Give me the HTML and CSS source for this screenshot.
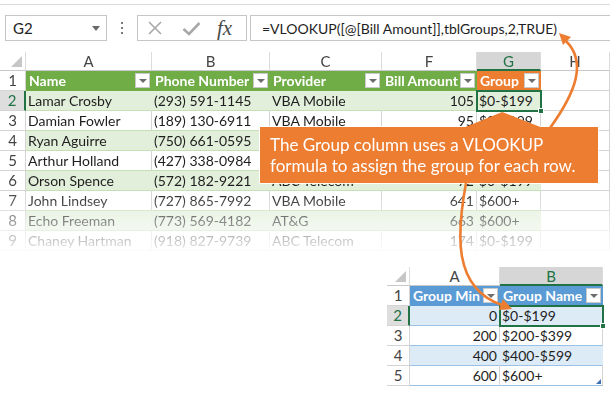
FILE: index.html
```html
<!DOCTYPE html>
<html>
<head>
<meta charset="utf-8">
<link rel="stylesheet" href="styles.css">
</head>
<body>
<div class="topline"></div>
<div class="fbar">
  <div class="namebox"><span>G2</span><span class="caret"></span></div>
  <div class="dots"><i></i><i></i><i></i></div>
  <div class="fxbox">
    <svg class="ico-x" width="16" height="16" viewBox="0 0 16 16"><path d="M2 2L14 14M14 2L2 14" stroke="#a8a8a8" stroke-width="1.6" fill="none"/></svg>
    <svg class="ico-ok" width="19" height="15" viewBox="0 0 19 15"><path d="M1.5 8L7 13L17.5 2" stroke="#a8a8a8" stroke-width="2.6" fill="none"/></svg>
    <span class="fx">fx</span>
  </div>
  <div class="formula">=VLOOKUP([@[Bill Amount]],tblGroups,2,TRUE)</div>
</div>

<div class="sheet s1">
  <div class="r ch">
    <div class="c corner"><span class="tri"></span></div>
    <div class="c">A</div><div class="c">B</div><div class="c">C</div><div class="c">F</div><div class="c selc">G</div><div class="c">H</div>
  </div>
  <div class="r hdr">
    <div class="c rh">1</div>
    <div class="c th g"><span>Name</span><i class="fb"></i></div>
    <div class="c th g"><span>Phone Number</span><i class="fb"></i></div>
    <div class="c th g"><span>Provider</span><i class="fb"></i></div>
    <div class="c th g"><span>Bill Amount</span><i class="fb"></i></div>
    <div class="c th o"><span>Group</span><i class="fb"></i></div>
    <div class="c"></div>
  </div>
  <div class="r band">
    <div class="c rh selr">2</div>
    <div class="c tc">Lamar Crosby</div><div class="c tc">(293) 591-1145</div><div class="c tc">VBA Mobile</div><div class="c tc num">105</div><div class="c tc active">$0-$199<i class="handle"></i></div><div class="c"></div>
  </div>
  <div class="r">
    <div class="c rh">3</div>
    <div class="c tc">Damian Fowler</div><div class="c tc">(189) 130-6911</div><div class="c tc">VBA Mobile</div><div class="c tc num">95</div><div class="c tc">$0-$199</div><div class="c"></div>
  </div>
  <div class="r band">
    <div class="c rh">4</div>
    <div class="c tc">Ryan Aguirre</div><div class="c tc">(750) 661-0595</div><div class="c tc">AT&amp;G</div><div class="c tc num">312</div><div class="c tc">$200-$399</div><div class="c"></div>
  </div>
  <div class="r">
    <div class="c rh">5</div>
    <div class="c tc">Arthur Holland</div><div class="c tc">(427) 338-0984</div><div class="c tc">ABC Telecom</div><div class="c tc num">226</div><div class="c tc">$200-$399</div><div class="c"></div>
  </div>
  <div class="r band">
    <div class="c rh">6</div>
    <div class="c tc">Orson Spence</div><div class="c tc">(572) 182-9221</div><div class="c tc">ABC Telecom</div><div class="c tc num">72</div><div class="c tc">$0-$199</div><div class="c"></div>
  </div>
  <div class="r">
    <div class="c rh">7</div>
    <div class="c tc">John Lindsey</div><div class="c tc">(727) 865-7992</div><div class="c tc">VBA Mobile</div><div class="c tc num">641</div><div class="c tc">$600+</div><div class="c"></div>
  </div>
  <div class="r band">
    <div class="c rh">8</div>
    <div class="c tc">Echo Freeman</div><div class="c tc">(773) 569-4182</div><div class="c tc">AT&amp;G</div><div class="c tc num">663</div><div class="c tc">$600+</div><div class="c"></div>
  </div>
  <div class="r">
    <div class="c rh">9</div>
    <div class="c tc">Chaney Hartman</div><div class="c tc">(918) 827-9739</div><div class="c tc">ABC Telecom</div><div class="c tc num">174</div><div class="c tc">$0-$199</div><div class="c"></div>
  </div>
</div>

<div class="sheet s2">
  <div class="r ch">
    <div class="c corner"><span class="tri"></span></div>
    <div class="c">A</div><div class="c selc">B</div>
  </div>
  <div class="r hdr">
    <div class="c rh">1</div>
    <div class="c th b"><span>Group Min</span><i class="fb"></i></div>
    <div class="c th b"><span>Group Name</span><i class="fb"></i></div>
  </div>
  <div class="r band">
    <div class="c rh selr">2</div>
    <div class="c tc num">0</div><div class="c tc active">$0-$199<i class="handle"></i></div>
  </div>
  <div class="r">
    <div class="c rh">3</div>
    <div class="c tc num">200</div><div class="c tc">$200-$399</div>
  </div>
  <div class="r band">
    <div class="c rh">4</div>
    <div class="c tc num">400</div><div class="c tc">$400-$599</div>
  </div>
  <div class="r last">
    <div class="c rh">5</div>
    <div class="c tc num">600</div><div class="c tc">$600+<i class="resize"></i></div>
  </div>
</div>

<div class="callout">The Group column uses a VLOOKUP<br>formula to assign the group for each row.</div>

<svg class="arrows" width="610" height="400" viewBox="0 0 610 400">
  <path d="M550 128 C 576 92, 587 62, 566 41" fill="none" stroke="#ED7D31" stroke-width="2.6"/>
  <path d="M559 33 L571 37 L563 45 Z" fill="#ED7D31"/>
  <path d="M466 183 C 457 232, 452 288, 502 305" fill="none" stroke="#ED7D31" stroke-width="2.6"/>
  <path d="M512 309 L499 310 L503 299 Z" fill="#ED7D31"/>
</svg>
</body>
</html>
```

FILE: styles.css
```css
* { box-sizing: border-box; margin: 0; padding: 0; }
html, body { width: 610px; height: 400px; overflow: hidden; background: #fff; }
body { font-family: Lato, "Liberation Sans", sans-serif; color: #1e1e1e; position: relative; }

.topline { height: 5px; border-bottom: 1px solid #d9d9d9; }

.fbar { display: flex; height: 26px; margin-top: 10px; }
.namebox { margin-left: 5px; width: 102px; border: 1px solid #c6c6c6; display: flex; align-items: center; justify-content: space-between; padding: 0 6px 0 7px; font-size: 15px; color: #222; }
.caret { width: 0; height: 0; border-left: 4px solid transparent; border-right: 4px solid transparent; border-top: 5px solid #6a6a6a; }
.dots { width: 30px; display: flex; flex-direction: column; align-items: center; justify-content: center; gap: 3px; }
.dots i { display: block; width: 2px; height: 2px; background: #7a7a7a; }
.fxbox { width: 110px; border: 1px solid #c6c6c6; display: flex; align-items: center; padding-left: 9px; }
.ico-x { margin-right: 19px; }
.ico-ok { margin-right: 16px; }
.fx { font-family: "Liberation Serif", serif; font-style: italic; font-size: 21px; color: #4a4a4a; line-height: 1; }
.formula { flex: 1; margin-left: 3px; border: 1px solid #c6c6c6; border-right: none; padding-left: 11px; font-size: 14px; display: flex; align-items: center; color: #1e1e1e; white-space: nowrap; }

.sheet { font-size: 14px; }
.s1 { margin-top: 11px; -webkit-mask-image: linear-gradient(to bottom, #000 138px, transparent 206px); mask-image: linear-gradient(to bottom, #000 138px, transparent 206px); }
.s1 .r { display: grid; grid-template-columns: 26px 126px 118px 112px 95px 64px 69px; height: 20px; }
.s2 { margin: 16px 0 0 387px; width: 216px; }
.s2 .r { display: grid; grid-template-columns: 23px 90px 103px; height: 20px; }

.c { position: relative; border-right: 1px solid #d4d4d4; border-bottom: 1px solid #d4d4d4; padding: 0 3px 0 2px; line-height: 19px; white-space: nowrap; overflow: hidden; }
.ch { height: 19px !important; }
.ch .c { text-align: center; color: #444; line-height: 18px; padding: 0; font-size: 15px; border-bottom-color: #c8c8c8; border-right-color: #dcdcdc; }
.ch .selc { background: #d6d6d6; color: #217346; border-bottom: 2px solid #217346; }
.corner { display: flex; align-items: flex-end; justify-content: flex-end; padding: 0 3px 3px 0 !important; }
.tri { width: 0; height: 0; border-left: 11px solid transparent; border-bottom: 11px solid #c6c6c6; }

.rh { text-align: center; padding: 0; color: #444; font-size: 15px; }
.selr { background: #dedede; color: #217346; border-right: 2px solid #217346; }

.th { display: flex; align-items: center; justify-content: space-between; color: #fff; font-weight: bold; padding: 0 1px 0 3px; overflow: hidden; }
.th span { overflow: hidden; white-space: nowrap; }
.th.g { background: #70AD47; border-right-color: #70AD47; border-bottom-color: #70AD47; }
.th.o { background: #ED7D31; border-right-color: #ED7D31; border-bottom-color: #ED7D31; }
.th.b { background: #5B9BD5; border-right-color: #5B9BD5; border-bottom-color: #5B9BD5; }
.fb { flex: none; width: 15px; height: 15px; background: #fff; border: 1px solid #c9c9c9; display: flex; align-items: center; justify-content: center; }
.fb::after { content: ""; width: 0; height: 0; border-left: 4px solid transparent; border-right: 4px solid transparent; border-top: 4px solid #6d6d6d; margin-top: 1px; }

.tc { color: #1e1e1e; }
.s1 .tc { border-bottom-color: #c6e0b4; }
.s1 .band .tc { background: #E2EFDA; border-right-color: #E2EFDA; }
.s2 .tc { border-bottom-color: #9BC2E6; }
.s2 .band .tc { background: #DDEBF7; border-right-color: #DDEBF7; }
.num { text-align: right; padding-right: 2px; }

.active { outline: 2px solid #217346; outline-offset: -1px; overflow: visible; z-index: 2; }
.handle { position: absolute; right: -4px; bottom: -4px; width: 6px; height: 6px; background: #217346; border: 1px solid #fff; }
.resize { position: absolute; right: 1px; bottom: 1px; width: 0; height: 0; border-left: 5px solid transparent; border-bottom: 5px solid #3c6fb4; }

.callout { position: absolute; left: 260px; top: 127px; width: 338px; height: 56px; background: #ED7D31; color: #fff; font-size: 17px; line-height: 21px; padding: 7px 0 0 10px; box-shadow: 0 0 0 1px rgba(255,255,255,0.9); z-index: 5; }
.callout::before { content: ""; position: absolute; left: 203px; top: -15px; width: 80px; height: 16px; background: #ED7D31; clip-path: polygon(0 100%, 49% 0, 100% 100%); }

.arrows { position: absolute; left: 0; top: 0; z-index: 6; pointer-events: none; }
```
